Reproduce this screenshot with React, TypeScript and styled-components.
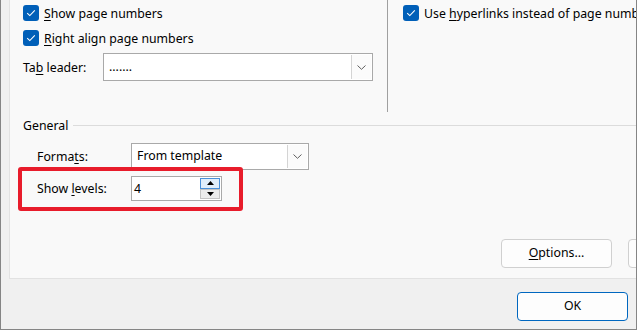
import styled, { createGlobalStyle } from "styled-components";

const GlobalStyle = createGlobalStyle`
  html, body {
    margin: 0;
    padding: 0;
  }
  body {
    width: 637px;
    height: 330px;
    overflow: hidden;
    font-family: "Noto Sans", "Open Sans", sans-serif;
    font-size: 12.3px;
    color: #000;
  }
`;

const Window = styled.div`
  box-sizing: border-box;
  width: 637px;
  height: 330px;
  background: #f0f0f0;
  border-left: 1px solid #858585;
  border-right: 1px solid #858585;
  border-bottom: 1px solid #858585;
  display: flex;
  flex-direction: column;
`;

const Panel = styled.div`
  box-sizing: border-box;
  margin-left: 8px;
  height: 279px;
  background: #f9f9f9;
  border-left: 1px solid #e2e2e2;
  border-bottom: 1px solid #e2e2e2;
  overflow: hidden;
  display: flex;
  flex-direction: column;
`;

const TopSection = styled.div`
  display: flex;
  height: 112px;
`;

const LeftCol = styled.div`
  box-sizing: border-box;
  width: 377px;
  padding: 5px 0 0 13px;
  display: flex;
  flex-direction: column;
`;

const Divider = styled.div`
  width: 1px;
  background: #a0a0a0;
`;

const RightCol = styled.div`
  flex: 1;
  padding: 5px 0 0 15px;
  white-space: nowrap;
  overflow: hidden;
`;

const CheckRow = styled.div`
  display: flex;
  align-items: center;
  gap: 5px;
  height: 16px;
  margin-bottom: 9px;
  white-space: nowrap;
`;

const Box = styled.span`
  box-sizing: border-box;
  width: 16px;
  height: 16px;
  border-radius: 3px;
  background: #005fb8;
  display: flex;
  align-items: center;
  justify-content: center;
  flex-shrink: 0;
`;

const Key = styled.u`
  text-decoration: underline;
  text-underline-offset: 2px;
  text-decoration-thickness: 1px;
`;

const FieldRow = styled.div<{ $indent: number; $top: number }>`
  display: flex;
  align-items: center;
  padding-left: ${(p) => p.$indent}px;
  margin-top: ${(p) => p.$top}px;
  position: relative;
`;

const Label = styled.span<{ $w: number }>`
  width: ${(p) => p.$w}px;
  flex-shrink: 0;
  white-space: nowrap;
`;

const Combo = styled.div<{ $w: number }>`
  box-sizing: border-box;
  width: ${(p) => p.$w}px;
  height: 28px;
  display: flex;
  background: #fff;
  border: 1px solid #a9a9a9;
`;

const ComboText = styled.div`
  flex: 1;
  display: flex;
  align-items: center;
  padding-left: 5px;
  padding-bottom: 2px;
`;

const ComboButton = styled.div`
  box-sizing: border-box;
  width: 20px;
  margin: 1px;
  border-left: 1px solid #d4d4d4;
  background: #fbfbfb;
  display: flex;
  align-items: center;
  justify-content: center;
`;

const Legend = styled.div`
  display: flex;
  align-items: center;
  gap: 5px;
  padding-left: 13px;
  margin-top: 5px;
  height: 16px;
`;

const LegendLine = styled.div`
  flex: 1;
  height: 1px;
  background: #dcdcdc;
`;

const Highlight = styled.div`
  position: absolute;
  left: 8px;
  top: -9px;
  width: 225px;
  height: 44px;
  box-sizing: border-box;
  border: 4px solid #e81c2b;
  border-radius: 3px;
  pointer-events: none;
`;

const Spin = styled.div`
  box-sizing: border-box;
  width: 91px;
  height: 25px;
  background: #fff;
  border: 1px solid #a9a9a9;
  display: flex;
`;

const SpinText = styled.div`
  flex: 1;
  display: flex;
  align-items: center;
  padding-left: 2px;
  padding-bottom: 1px;
`;

const SpinButtons = styled.div`
  width: 20px;
  display: flex;
  flex-direction: column;
  padding: 1px 1px 1px 0;
`;

const SpinButton = styled.div<{ $hot?: boolean }>`
  box-sizing: border-box;
  flex: 1;
  display: flex;
  align-items: center;
  justify-content: center;
  background: ${(p) => (p.$hot ? "#e1eefa" : "#ececec")};
  border: 1px solid ${(p) => (p.$hot ? "#4a90d9" : "#c4c4c4")};
`;

const ButtonRow = styled.div`
  display: flex;
  gap: 16px;
  padding-left: 491px;
  margin-top: 38px;
`;

const Button = styled.div<{ $primary?: boolean }>`
  box-sizing: border-box;
  width: 111px;
  height: 29px;
  flex-shrink: 0;
  display: flex;
  align-items: center;
  justify-content: center;
  padding-bottom: 2px;
  background: #fdfdfd;
  border: 1px solid ${(p) => (p.$primary ? "#0067c0" : "#d0d0d0")};
  border-radius: 4px;
`;

const Footer = styled.div`
  display: flex;
  justify-content: flex-end;
  padding-right: 8px;
  margin-top: 13px;
`;

const Check = () => (
  <Box>
    <svg width="10" height="8" viewBox="0 0 10 8">
      <path d="M1.2 4.2 L3.8 6.6 L8.8 1.4" fill="none" stroke="#fff" strokeWidth="1.1" />
    </svg>
  </Box>
);

const Chevron = () => (
  <svg width="9" height="5" viewBox="0 0 9 5">
    <path d="M0.5 0.5 L4.5 4.3 L8.5 0.5" fill="none" stroke="#606060" strokeWidth="1" />
  </svg>
);

const Arrow = ({ up }: { up?: boolean }) => (
  <svg width="7" height="4" viewBox="0 0 7 4">
    <path d={up ? "M0 4 L3.5 0 L7 4 Z" : "M0 0 L3.5 4 L7 0 Z"} fill="#000" />
  </svg>
);

function App() {
  return (
    <>
      <GlobalStyle />
      <Window>
        <Panel>
          <TopSection>
            <LeftCol>
              <CheckRow>
                <Check />
                <span><Key>S</Key>how page numbers</span>
              </CheckRow>
              <CheckRow>
                <Check />
                <span><Key>R</Key>ight align page numbers</span>
              </CheckRow>
              <FieldRow $indent={0} $top={-2}>
                <Label $w={80}>Ta<Key>b</Key> leader:</Label>
                <Combo $w={270}>
                  <ComboText>.......</ComboText>
                  <ComboButton><Chevron /></ComboButton>
                </Combo>
              </FieldRow>
            </LeftCol>
            <Divider />
            <RightCol>
              <CheckRow>
                <Check />
                <span>Use <Key>h</Key>yperlinks instead of page numbers</span>
              </CheckRow>
            </RightCol>
          </TopSection>

          <Legend>
            <span>General</span>
            <LegendLine />
          </Legend>

          <FieldRow $indent={27} $top={10}>
            <Label $w={94}>Forma<Key>t</Key>s:</Label>
            <Combo $w={178} style={{ height: 27 }}>
              <ComboText>From template</ComboText>
              <ComboButton><Chevron /></ComboButton>
            </Combo>
          </FieldRow>

          <FieldRow $indent={27} $top={6}>
            <Label $w={94}>Show <Key>l</Key>evels:</Label>
            <Spin>
              <SpinText>4</SpinText>
              <SpinButtons>
                <SpinButton $hot><Arrow up /></SpinButton>
                <SpinButton><Arrow /></SpinButton>
              </SpinButtons>
            </Spin>
            <Highlight />
          </FieldRow>

          <ButtonRow>
            <Button><span><Key>O</Key>ptions...</span></Button>
            <Button>Modify...</Button>
          </ButtonRow>
        </Panel>

        <Footer>
          <Button $primary>OK</Button>
        </Footer>
      </Window>
    </>
  );
}

export default App;
